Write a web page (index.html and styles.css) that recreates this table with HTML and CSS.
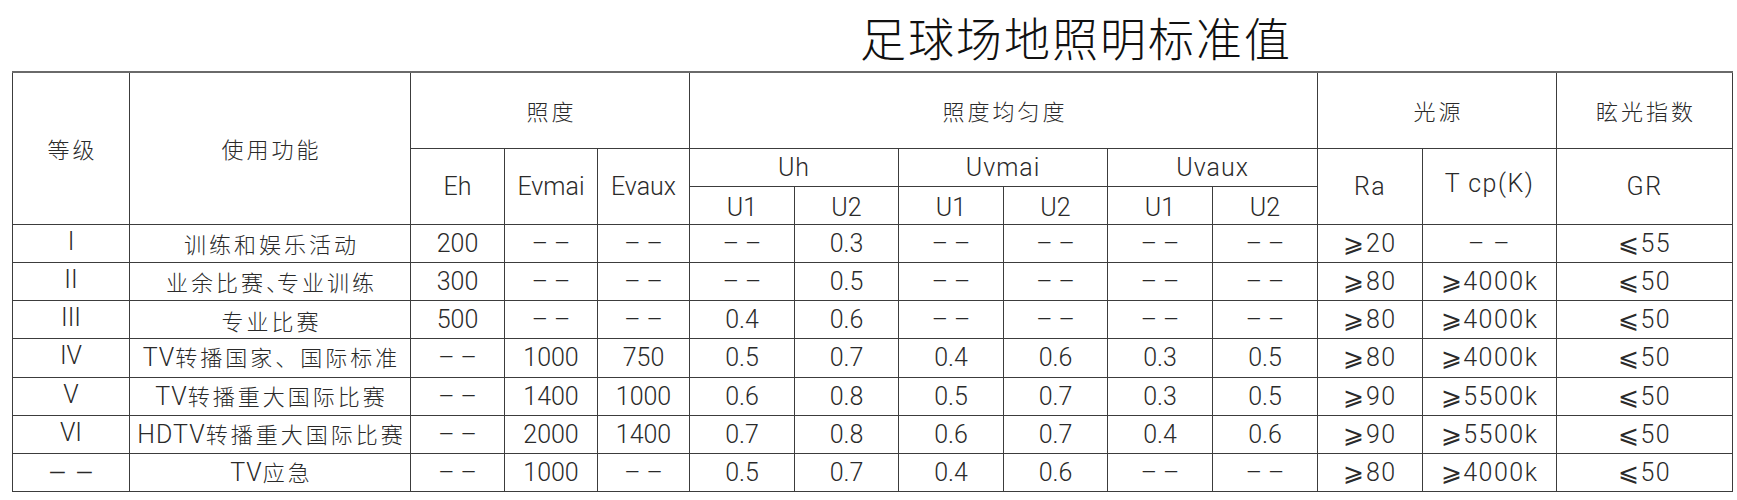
FILE: index.html
```html
<!DOCTYPE html>
<html lang="zh-CN">
<head>
<meta charset="utf-8">
<title>足球场地照明标准值</title>
<link rel="stylesheet" href="styles.css">
</head>
<body>
<div class="page">
  <h1 class="title">足球场地照明标准值</h1>
  <table class="spec">
    <colgroup>
      <col class="c-grade"><col class="c-func">
      <col class="c-e"><col class="c-e2"><col class="c-e3">
      <col class="c-u1"><col class="c-u"><col class="c-u1"><col class="c-u"><col class="c-u1"><col class="c-u1">
      <col class="c-ra"><col class="c-tcp"><col class="c-gr">
    </colgroup>
    <thead>
      <tr class="r-top">
        <th rowspan="3" class="cjk">等级</th>
        <th rowspan="3" class="cjk">使用功能</th>
        <th colspan="3" class="cjk">照度</th>
        <th colspan="6" class="cjk">照度均匀度</th>
        <th colspan="2" class="cjk">光源</th>
        <th class="cjk">眩光指数</th>
      </tr>
      <tr class="r-mid">
        <th rowspan="2">Eh</th>
        <th rowspan="2">Evmai</th>
        <th rowspan="2">Evaux</th>
        <th colspan="2" class="sp">Uh</th>
        <th colspan="2" class="sp">Uvmai</th>
        <th colspan="2" class="sp">Uvaux</th>
        <th rowspan="2" class="wide">Ra</th>
        <th rowspan="2" class="wide up">T cp(K)</th>
        <th rowspan="2" class="wide">GR</th>
      </tr>
      <tr class="r-sub">
        <th class="low">U1</th><th class="low">U2</th>
        <th class="low">U1</th><th class="low">U2</th>
        <th class="low">U1</th><th class="low">U2</th>
      </tr>
    </thead>
    <tbody>
      <tr>
        <td class="rom">I</td><td class="cjk">训练和娱乐活动</td>
        <td>200</td><td>– –</td><td>– –</td>
        <td>– –</td><td>0.3</td><td>– –</td><td>– –</td><td>– –</td><td>– –</td>
        <td class="wide">⩾20</td><td class="wide">– –</td><td class="wide">⩽55</td>
      </tr>
      <tr>
        <td class="rom">II</td><td class="cjk">业余比赛<span class="half">、</span>专业训练</td>
        <td>300</td><td>– –</td><td>– –</td>
        <td>– –</td><td>0.5</td><td>– –</td><td>– –</td><td>– –</td><td>– –</td>
        <td class="wide">⩾80</td><td class="wide">⩾4000k</td><td class="wide">⩽50</td>
      </tr>
      <tr>
        <td class="rom">III</td><td class="cjk">专业比赛</td>
        <td>500</td><td>– –</td><td>– –</td>
        <td>0.4</td><td>0.6</td><td>– –</td><td>– –</td><td>– –</td><td>– –</td>
        <td class="wide">⩾80</td><td class="wide">⩾4000k</td><td class="wide">⩽50</td>
      </tr>
      <tr>
        <td class="rom">IV</td><td class="cjk"><span class="lat">TV</span>转播国家、国际标准</td>
        <td>– –</td><td>1000</td><td>750</td>
        <td>0.5</td><td>0.7</td><td>0.4</td><td>0.6</td><td>0.3</td><td>0.5</td>
        <td class="wide">⩾80</td><td class="wide">⩾4000k</td><td class="wide">⩽50</td>
      </tr>
      <tr>
        <td class="rom">V</td><td class="cjk"><span class="lat">TV</span>转播重大国际比赛</td>
        <td>– –</td><td>1400</td><td>1000</td>
        <td>0.6</td><td>0.8</td><td>0.5</td><td>0.7</td><td>0.3</td><td>0.5</td>
        <td class="wide">⩾90</td><td class="wide">⩾5500k</td><td class="wide">⩽50</td>
      </tr>
      <tr>
        <td class="rom">VI</td><td class="cjk"><span class="lat">HDTV</span>转播重大国际比赛</td>
        <td>– –</td><td>2000</td><td>1400</td>
        <td>0.7</td><td>0.8</td><td>0.6</td><td>0.7</td><td>0.4</td><td>0.6</td>
        <td class="wide">⩾90</td><td class="wide">⩾5500k</td><td class="wide">⩽50</td>
      </tr>
      <tr>
        <td class="rom dash">– –</td><td class="cjk"><span class="lat">TV</span>应急</td>
        <td>– –</td><td>1000</td><td>– –</td>
        <td>0.5</td><td>0.7</td><td>0.4</td><td>0.6</td><td>– –</td><td>– –</td>
        <td class="wide">⩾80</td><td class="wide">⩾4000k</td><td class="wide">⩽50</td>
      </tr>
    </tbody>
  </table>
</div>
</body>
</html>
```

FILE: styles.css
```css
html, body {
  margin: 0;
  padding: 0;
  background: #ffffff;
}

.page {
  width: 1737px;
  height: 500px;
  overflow: hidden;
}

.title {
  margin: 0;
  height: 71px;
  padding-left: 860px;
  font-family: "Noto Sans CJK SC", sans-serif;
  font-weight: 300;
  font-size: 46px;
  line-height: 72px;
  letter-spacing: 2px;
  color: #111111;
}

.spec {
  margin-left: 12px;
  width: 1720px;
  table-layout: fixed;
  border-collapse: collapse;
  font-family: "Roboto", "Liberation Sans", "DejaVu Sans", "Noto Sans CJK SC", sans-serif;
  font-size: 25px;
  font-weight: 300;
  color: #2a2a2a;
  border-top: 2px solid #6a6a6a;
}

.c-grade { width: 117px; }
.c-func { width: 281px; }
.c-e { width: 94px; }
.c-e2 { width: 93px; }
.c-e3 { width: 92px; }
.c-u1 { width: 105px; }
.c-u { width: 104px; }
.c-ra { width: 105px; }
.c-tcp { width: 134px; }
.c-gr { width: 176px; }

.spec th,
.spec td {
  border: 1px solid #3c3c3c;
  padding: 0;
  text-align: center;
  vertical-align: middle;
  font-weight: 300;
  white-space: nowrap;
  line-height: 1;
}

.spec tr { height: 38px; }
.spec .r-top { height: 76px; }
.spec tbody tr { height: 38.25px; }

.spec .cjk {
  font-family: "Noto Sans CJK SC", sans-serif;
  font-weight: 300;
  font-size: 22px;
  letter-spacing: 3px;
  padding-left: 3px;
}

.spec .cjk .lat {
  font-family: "Roboto", "Liberation Sans", sans-serif;
  font-weight: 300;
  font-size: 25px;
  letter-spacing: 1px;
}

.spec .half {
  font-feature-settings: "halt";
  letter-spacing: 0;
}

.spec .sp { letter-spacing: 1px; }

.spec .low { padding-top: 4px; }

.spec .up { padding-bottom: 6px; }

.spec .wide {
  letter-spacing: 1.5px;
}

.spec .rom { padding-bottom: 4px; }

.spec .dash { font-size: 30px; letter-spacing: 0; padding-bottom: 0; }
```
